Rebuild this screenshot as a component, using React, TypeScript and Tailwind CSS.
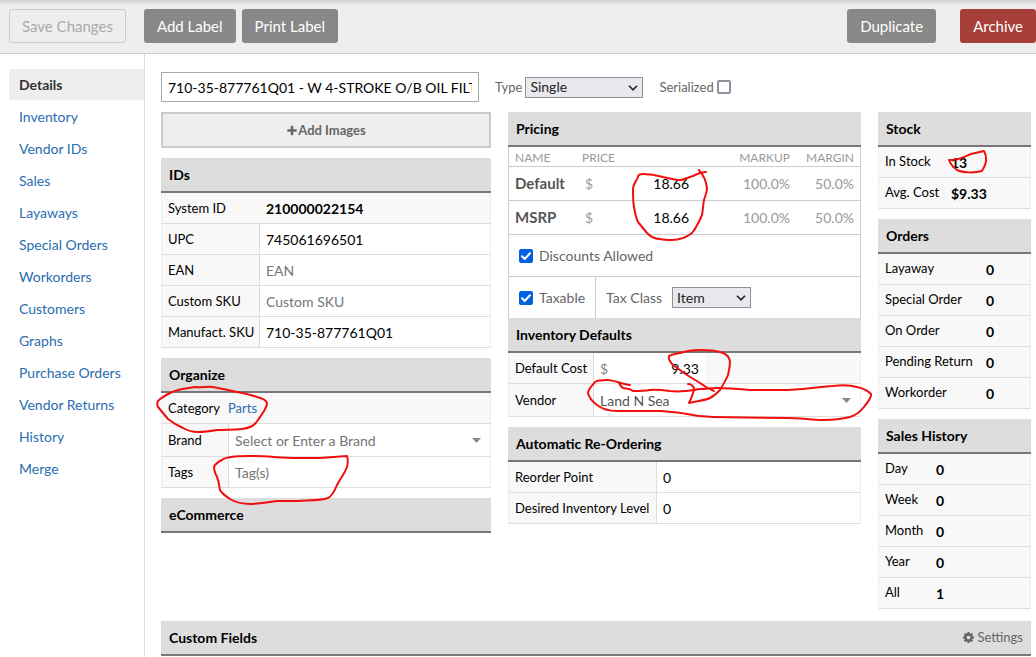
import { useState } from "react";
import type { ReactNode } from "react";

const navItems = [
  "Details",
  "Inventory",
  "Vendor IDs",
  "Sales",
  "Layaways",
  "Special Orders",
  "Workorders",
  "Customers",
  "Graphs",
  "Purchase Orders",
  "Vendor Returns",
  "History",
  "Merge",
];

const ids = [
  { id: "upc", label: "UPC", value: "745061696501", placeholder: "" },
  { id: "ean", label: "EAN", value: "", placeholder: "EAN" },
  { id: "custom-sku", label: "Custom SKU", value: "", placeholder: "Custom SKU" },
  { id: "manufact-sku", label: "Manufact. SKU", value: "710-35-877761Q01", placeholder: "" },
];

const prices = [
  { name: "Default", price: "18.66", markup: "100.0%", margin: "50.0%" },
  { name: "MSRP", price: "18.66", markup: "100.0%", margin: "50.0%" },
];

const stock = [
  ["In Stock", "13"],
  ["Avg. Cost", "$9.33"],
];

const orders = [
  ["Layaway", "0"],
  ["Special Order", "0"],
  ["On Order", "0"],
  ["Pending Return", "0"],
  ["Workorder", "0"],
];

const sales = [
  ["Day", "0"],
  ["Week", "0"],
  ["Month", "0"],
  ["Year", "0"],
  ["All", "1"],
];

// hand-drawn marker strokes laid over the form
const markerStrokes = [
  "M949 160C957 161 966 156 971 154L984 151C988 158 986 165 982 171C974 173 963 173 957 170C953 167 950 163 949 160",
  "M706 172C701 172 697 174 693 176C688 177 683 181 678 180C672 179 668 178 663 177C656 175 650 174 643 174C640 174 638 175 638 177C636 182 633 184 633 189C633 196 633 202 634 207C635 213 636 218 638 222L647 233C651 237 656 239 660 239C664 240 668 240 672 240C679 240 687 237 692 233C696 228 699 222 702 215C703 210 703 205 704 200C705 196 707 193 707 188C706 182 705 177 699 170",
  "M228 390L213 387C207 386 202 388 195 387C187 388 176 390 170 393C164 396 161 398 158 401C157 403 157 405 158 407L168 419C173 423 178 426 183 428C188 431 192 432 198 432C204 432 211 431 217 430C228 429 242 431 250 427C254 426 256 423 258 420C261 415 267 409 267 403C266 400 261 398 257 397C249 394 236 392 228 390",
  "M222 460C225 457 240 456 250 456C268 456 280 458 297 458L320 458L347 456C348 459 348 463 347 467C345 473 340 479 337 485C335 490 332 496 328 498C319 501 307 500 297 501L277 501C268 502 259 504 250 504C243 504 235 502 230 499C226 496 222 494 220 490C219 486 219 481 217 477C215 473 214 470 214 467C215 464 218 462 222 460",
  "M630 385C622 384 614 380 607 380C602 380 598 380 595 382C592 386 588 389 588 393C589 398 593 402 597 405C602 409 609 411 617 411L660 411C670 412 678 412 687 414C696 416 705 417 713 417L787 418C800 418 812 420 823 420C833 420 842 419 850 417C856 415 860 412 863 408C867 403 872 398 871 394C867 390 862 388 857 387C850 385 841 385 833 386C814 387 796 391 777 390L750 390C739 389 729 388 717 388C711 388 706 389 700 389C690 391 680 392 670 391C663 390 656 389 650 390C644 391 639 391 633 391C630 388 626 389 623 388C621 387 620 385 619 383",
  "M714 391C709 389 704 386 700 383L687 375L673 365C670 362 668 359 669 356C672 354 676 354 680 353C686 351 693 350 700 350C707 350 714 350 720 352C724 353 729 356 730 361C730 366 729 371 728 375C726 380 723 385 720 390C717 393 714 396 710 398C704 401 695 401 689 403C691 398 694 393 694 388C693 386 691 384 688 384",
];

function Panel({ title, action, children }: { title: string; action?: ReactNode; children?: ReactNode }) {
  return (
    <section>
      <div className="flex h-[35px] items-center justify-between border-b-2 border-[#777] bg-[#ddd] px-2">
        <h2 className="text-sm font-bold text-black">{title}</h2>
        {action}
      </div>
      {children}
    </section>
  );
}

function StatTable({ rows, labelWidth }: { rows: string[][]; labelWidth: string }) {
  return (
    <table className="w-full table-fixed border-separate border-spacing-0 border-x border-[#eee] bg-[#f8f8f8]">
      <tbody>
        {rows.map(([label, value]) => (
          <tr key={label} className="h-[31px]">
            <th scope="row" className={`${labelWidth} border-b border-[#ddd] pl-1.5 text-left text-[13px] font-normal whitespace-nowrap`}>
              {label}
            </th>
            <td className="border-b border-[#ddd] pt-0.5 text-sm font-bold">{value}</td>
          </tr>
        ))}
      </tbody>
    </table>
  );
}

function FieldRow({ id, label, labelWidth, tall, children }: { id: string; label: string; labelWidth: string; tall?: boolean; children: ReactNode }) {
  return (
    <div className={`flex border-x border-b border-x-[#eee] border-b-[#ddd] ${tall ? "h-[33px]" : "h-[31px]"}`}>
      <label htmlFor={id} className={`${labelWidth} flex shrink-0 items-center border-r border-[#ddd] bg-[#f8f8f8] pt-px pl-1.5 text-[13px] whitespace-nowrap`}>
        {label}
      </label>
      {children}
    </div>
  );
}

function TextInput({ id, value = "", placeholder }: { id: string; value?: string; placeholder?: string }) {
  return (
    <input
      id={id}
      type="text"
      defaultValue={value}
      placeholder={placeholder}
      className="min-w-0 flex-1 bg-white px-1.5 pt-0.5 text-sm text-black outline-none placeholder:text-[#757575]"
    />
  );
}

function ComboCaret() {
  return (
    <button type="button" aria-label="Show options" className="flex w-7 items-center justify-center bg-white">
      <svg viewBox="0 0 9 5" className="h-[5px] w-[9px] fill-[#888]">
        <path d="M0 0h9L4.500 5z" />
      </svg>
    </button>
  );
}

function SelectBox({ id, options, className }: { id: string; options: string[]; className: string }) {
  return (
    <div className={`relative ${className}`}>
      <select id={id} className="block h-[21px] w-full appearance-none border border-[#8f8f9d] bg-[#e9e9ed] pl-1 text-sm leading-none text-[#222]">
        {options.map((o) => (
          <option key={o}>{o}</option>
        ))}
      </select>
      <svg viewBox="0 0 10 6" className="pointer-events-none absolute top-2 right-[5px] h-1.5 w-2.5 fill-none stroke-[#222]" strokeWidth="1.6">
        <path d="M1 .8l4 4 4-4" />
      </svg>
    </div>
  );
}

function CheckBox({ id, initial }: { id: string; initial: boolean }) {
  const [checked, setChecked] = useState(initial);
  return (
    <span className="relative flex size-3.5">
      <input
        id={id}
        type="checkbox"
        checked={checked}
        onChange={(e) => setChecked(e.target.checked)}
        className="size-3.5 appearance-none rounded-xs border-2 border-[#8f8f9d] bg-white checked:border-[#0060df] checked:bg-[#0060df]"
      />
      {checked && (
        <svg viewBox="0 0 14 14" className="pointer-events-none absolute inset-0 size-3.5 fill-none stroke-white" strokeWidth="2">
          <path d="M3 7.300l2.700 2.700L11 4.300" strokeLinecap="round" strokeLinejoin="round" />
        </svg>
      )}
    </span>
  );
}

function PlusIcon() {
  return (
    <svg viewBox="0 0 1792 1792" className="size-3 fill-current">
      <path d="M1600 736v192q0 40-28 68t-68 28h-416v416q0 40-28 68t-68 28h-192q-40 0-68-28t-28-68v-416h-416q-40 0-68-28t-28-68v-192q0-40 28-68t68-28h416v-416q0-40 28-68t68-28h192q40 0 68 28t28 68v416h416q40 0 68 28t28 68z" />
    </svg>
  );
}

function CogIcon() {
  return (
    <svg viewBox="0 0 1792 1792" className="size-[13px] fill-current">
      <path d="M1152 896q0-106-75-181t-181-75-181 75-75 181 75 181 181 75 181-75 75-181zm512-109v222q0 12-8 23t-20 13l-185 28q-19 54-39 91 35 50 107 138 10 12 10 25t-9 23q-27 37-99 108t-94 71q-12 0-26-9l-138-108q-44 23-91 38-16 136-29 186-7 28-36 28h-222q-14 0-24.500-8.500t-11.500-21.500l-28-184q-49-16-90-37l-141 107q-10 9-25 9-14 0-25-11-126-114-165-168-7-10-7-23 0-12 8-23 15-21 51-66.500t54-70.500q-27-50-41-99l-183-27q-13-2-21-12.500t-8-23.500v-222q0-12 8-23t19-13l186-28q14-46 39-92-40-57-107-138-10-12-10-24 0-10 9-23 26-36 98.500-107.500t94.500-71.500q13 0 26 10l138 107q44-23 91-38 16-136 29-186 7-28 36-28h222q14 0 24.500 8.500t11.500 21.500l28 184q49 16 90 37l142-107q9-9 24-9 13 0 25 10 129 119 165 170 7 8 7 22 0 12-8 23-15 21-51 66.500t-54 70.500q26 50 41 98l183 28q13 2 21 12.500t8 23.500z" />
    </svg>
  );
}

function Toolbar() {
  const gray = "h-[34px] rounded-[3px] bg-[#888] px-[13px] text-[15px] text-white";
  return (
    <header className="border-b border-[#ccc] bg-[#eee]">
      <div className="h-[9px] bg-linear-to-b from-[#d2d2d2] to-[#eee] to-60%" />
      <div className="flex pb-2.5 pl-[9px]">
        <button className="mr-[18px] h-[34px] rounded-[3px] border border-[#ccc] px-3 text-[15px] text-[#aaa]" disabled>
          Save Changes
        </button>
        <button className={`${gray} mr-1.5`}>Add Label</button>
        <button className={gray}>Print Label</button>
        <button className={`${gray} mr-6 ml-auto`}>Duplicate</button>
        <button className="h-[34px] rounded-[3px] bg-[#a63e3a] px-[13px] text-[15px] text-white">Archive</button>
      </div>
    </header>
  );
}

function PricingPanel() {
  return (
    <Panel title="Pricing">
      <div className="border-x border-[#ccc] text-[#666]">
        <table className="w-full table-fixed border-separate border-spacing-0">
          <thead>
            <tr className="h-5 text-xs text-[#999]">
              <th className="w-[73px] border-b border-[#ccc] pt-0.5 pl-1.5 text-left font-normal">NAME</th>
              <th className="border-b border-[#ccc] pt-0.5 text-left font-normal">PRICE</th>
              <th className="w-[102px] border-b border-[#ccc] pt-0.5 text-right font-normal">MARKUP</th>
              <th className="w-[70px] border-b border-[#ccc] pt-0.5 pr-1.5 text-right font-normal">MARGIN</th>
            </tr>
          </thead>
          <tbody>
            {prices.map((p) => (
              <tr key={p.name} className="h-[34px] text-sm text-[#999]">
                <th scope="row" className="border-b border-[#ccc] pl-1.5 text-left text-[15px] font-bold text-[#555]">
                  {p.name}
                </th>
                <td className="border-b border-[#ccc]">
                  <div className="flex items-center pl-[3px]">
                    <span>$</span>
                    <input type="text" aria-label={`${p.name} price`} defaultValue={p.price} className="w-24 bg-transparent text-right text-black outline-none" />
                  </div>
                </td>
                <td className="border-b border-[#ccc] text-right">{p.markup}</td>
                <td className="border-b border-[#ccc] pr-1.5 text-right">{p.margin}</td>
              </tr>
            ))}
          </tbody>
        </table>
        <div className="flex h-[42px] items-center gap-1.5 border-b border-[#ccc] pl-2.5">
          <CheckBox id="discounts" initial />
          <label htmlFor="discounts" className="text-sm">
            Discounts Allowed
          </label>
        </div>
        <div className="flex h-[41px]">
          <div className="flex items-center gap-1.5 border-r border-[#ccc] pr-2.5 pl-2.5">
            <CheckBox id="taxable" initial />
            <label htmlFor="taxable" className="text-sm">
              Taxable
            </label>
          </div>
          <div className="flex items-center gap-2.5 pl-2.5">
            <label htmlFor="tax-class" className="text-sm">
              Tax Class
            </label>
            <SelectBox id="tax-class" options={["Item", "Labor"]} className="w-[79px]" />
          </div>
        </div>
      </div>
    </Panel>
  );
}

export default function App() {
  return (
    <div className="relative flex min-h-screen flex-col overflow-hidden bg-white font-[Lato,sans-serif] text-black">
      <Toolbar />
      <div className="flex flex-1">
        <nav className="w-[145px] shrink-0 border-r border-[#ddd] pt-[15px] pl-[9px]">
          <ul className="flex flex-col gap-px">
            {navItems.map((item, i) => (
              <li key={item}>
                <a
                  href="#"
                  className={
                    i === 0
                      ? "flex h-[31px] items-center bg-[#eee] pl-2.5 text-sm font-bold text-[#333]"
                      : "flex h-[31px] items-center pl-2.5 text-sm text-[#2a6db0]"
                  }
                >
                  {item}
                </a>
              </li>
            ))}
          </ul>
        </nav>

        <main className="min-w-0 flex-1 pt-[18px] pr-[5px] pl-4">
          <div className="flex items-center text-[#666]">
            <input
              type="text"
              aria-label="Description"
              defaultValue="710-35-877761Q01 - W 4-STROKE O/B OIL FILTER"
              className="mr-4 h-[30px] w-[318px] border border-[#aaa] px-1.5 text-sm text-black"
            />
            <label htmlFor="type" className="mr-[3px] pt-0.5 text-[13px]">
              Type
            </label>
            <SelectBox id="type" options={["Single", "Box", "Assembly"]} className="mr-4 w-[118px]" />
            <label htmlFor="serialized" className="mr-[3px] pt-0.5 text-[13px]">
              Serialized
            </label>
            <CheckBox id="serialized" initial={false} />
          </div>

          <div className="mt-2.5 grid grid-cols-[330fr_353fr_153fr] items-start gap-[17px]">
            <div className="flex flex-col gap-2.5">
              <button className="flex h-9 items-center justify-center border-2 border-[#ccc] bg-[#eee] pt-0.5 text-[13px] font-bold text-[#666]">
                <PlusIcon />
                Add Images
              </button>

              <Panel title="IDs">
                <div className="flex h-[31px] items-center border-x border-b border-x-[#eee] border-b-[#ddd] bg-[#f8f8f8] pt-0.5 pl-1.5">
                  <span className="w-[98px] text-[13px]">System ID</span>
                  <span className="text-sm font-bold">210000022154</span>
                </div>
                {ids.map((f) => (
                  <FieldRow key={f.id} id={f.id} label={f.label} labelWidth="w-[98px]">
                    <TextInput id={f.id} value={f.value} placeholder={f.placeholder} />
                  </FieldRow>
                ))}
              </Panel>

              <Panel title="Organize">
                <div className="flex h-[31px] items-center border-x border-b border-x-[#eee] border-b-[#ddd] bg-[#f8f8f8] pt-0.5 pl-1.5 text-[13px]">
                  <span className="w-[60px]">Category</span>
                  <a href="#" className="text-[#2a6db0]">
                    Parts
                  </a>
                </div>
                <FieldRow id="brand" label="Brand" labelWidth="w-[67px]" tall>
                  <TextInput id="brand" placeholder="Select or Enter a Brand" />
                  <ComboCaret />
                </FieldRow>
                <FieldRow id="tags" label="Tags" labelWidth="w-[67px]">
                  <TextInput id="tags" placeholder="Tag(s)" />
                </FieldRow>
              </Panel>

              <Panel title="eCommerce" />
            </div>

            <div className="flex flex-col gap-2.5">
              <div>
                <PricingPanel />
                <Panel title="Inventory Defaults">
                  <FieldRow id="default-cost" label="Default Cost" labelWidth="w-[85px]">
                    <div className="flex flex-1 items-center bg-[#f8f8f8]">
                      <div className="flex h-full w-[111px] items-center bg-white px-1.5 pt-0.5 text-sm">
                        <span className="text-[#888]">$</span>
                        <input id="default-cost" type="text" defaultValue="9.33" className="min-w-0 flex-1 text-right text-black outline-none" />
                      </div>
                    </div>
                  </FieldRow>
                  <FieldRow id="vendor" label="Vendor" labelWidth="w-[85px]" tall>
                    <input id="vendor" type="text" defaultValue="Land N Sea" className="min-w-0 flex-1 px-1.5 pt-0.5 text-sm text-[#555] outline-none" />
                    <ComboCaret />
                  </FieldRow>
                </Panel>
              </div>

              <Panel title="Automatic Re-Ordering">
                <FieldRow id="reorder-point" label="Reorder Point" labelWidth="w-[148px]">
                  <TextInput id="reorder-point" value="0" />
                </FieldRow>
                <FieldRow id="desired-level" label="Desired Inventory Level" labelWidth="w-[148px]">
                  <TextInput id="desired-level" value="0" />
                </FieldRow>
              </Panel>
            </div>

            <div className="flex flex-col gap-2.5">
              <Panel title="Stock">
                <StatTable rows={stock} labelWidth="w-[72px]" />
              </Panel>
              <Panel title="Orders">
                <StatTable rows={orders} labelWidth="w-[107px]" />
              </Panel>
              <Panel title="Sales History">
                <StatTable rows={sales} labelWidth="w-[57px]" />
              </Panel>
            </div>
          </div>

          <div className="mt-3">
            <Panel
              title="Custom Fields"
              action={
                <button className="flex items-center gap-0.5 text-[13px] text-[#666]">
                  <CogIcon />
                  Settings
                </button>
              }
            />
          </div>
        </main>
      </div>

      <svg
        viewBox="0 0 1036 657"
        className="pointer-events-none absolute top-0 left-0 h-[657px] w-[1036px] fill-none stroke-[#f00f0f]"
        strokeWidth="2"
        strokeLinecap="round"
        strokeLinejoin="round"
        aria-hidden="true"
      >
        {markerStrokes.map((d) => (
          <path key={d} d={d} />
        ))}
      </svg>
    </div>
  );
}
